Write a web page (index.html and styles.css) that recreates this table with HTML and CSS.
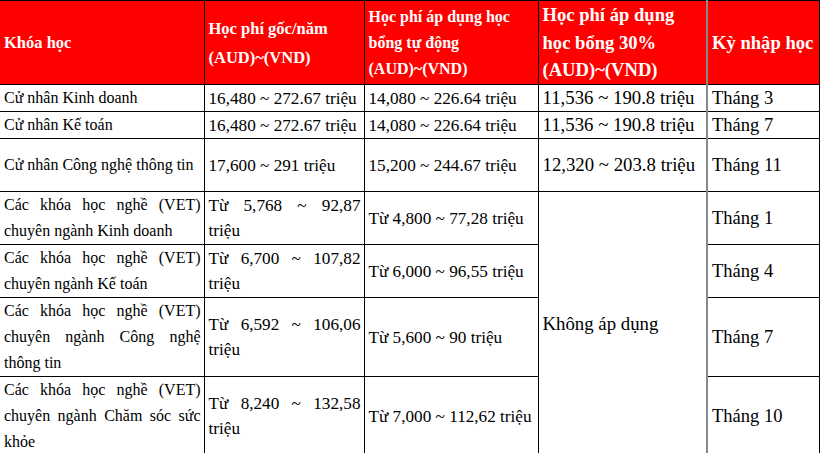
FILE: index.html
```html
<!DOCTYPE html>
<html lang="vi">
<head>
<meta charset="utf-8">
<title>Học phí</title>
<link rel="stylesheet" href="styles.css">
</head>
<body>
<table class="fees">
  <colgroup>
    <col class="c1"><col class="c2"><col class="c3"><col class="c4"><col class="c5">
  </colgroup>
  <thead>
    <tr class="r-head">
      <th class="h1">Khóa học</th>
      <th class="h2">Học phí gốc/năm<br>(AUD)~(VND)</th>
      <th class="h3">Học phí áp dụng học<br>bổng tự động<br>(AUD)~(VND)</th>
      <th class="h4">Học phí áp dụng<br>học bổng 30%<br>(AUD)~(VND)</th>
      <th class="h5 k5">Kỳ nhập học</th>
    </tr>
  </thead>
  <tbody>
    <tr class="r-27">
      <td class="d1">Cử nhân Kinh doanh</td>
      <td class="d2">16,480 ~ 272.67 triệu</td>
      <td class="d3">14,080 ~ 226.64 triệu</td>
      <td class="d4">11,536 ~ 190.8 triệu</td>
      <td class="d5 k5">Tháng 3</td>
    </tr>
    <tr class="r-27">
      <td class="d1">Cử nhân Kế toán</td>
      <td class="d2">16,480 ~ 272.67 triệu</td>
      <td class="d3">14,080 ~ 226.64 triệu</td>
      <td class="d4">11,536 ~ 190.8 triệu</td>
      <td class="d5 k5">Tháng 7</td>
    </tr>
    <tr class="r-53">
      <td class="d1">Cử nhân Công nghệ thông tin</td>
      <td class="d2">17,600 ~ 291 triệu</td>
      <td class="d3">15,200 ~ 244.67 triệu</td>
      <td class="d4">12,320 ~ 203.8 triệu</td>
      <td class="d5 k5">Tháng 11</td>
    </tr>
    <tr class="r-52">
      <td class="d1 just">Các khóa học nghề (VET) chuyên ngành Kinh doanh</td>
      <td class="d2 just">Từ 5,768 ~ 92,87 triệu</td>
      <td class="d3">Từ 4,800 ~ 77,28 triệu</td>
      <td class="d4" rowspan="4">Không áp dụng</td>
      <td class="d5 k5">Tháng 1</td>
    </tr>
    <tr class="r-52">
      <td class="d1 just">Các khóa học nghề (VET) chuyên ngành Kế toán</td>
      <td class="d2 just">Từ 6,700 ~ 107,82 triệu</td>
      <td class="d3">Từ 6,000 ~ 96,55 triệu</td>
      <td class="d5 k5">Tháng 4</td>
    </tr>
    <tr class="r-78">
      <td class="d1 just">Các khóa học nghề (VET) chuyên ngành Công nghệ thông tin</td>
      <td class="d2 just">Từ 6,592 ~ 106,06 triệu</td>
      <td class="d3">Từ 5,600 ~ 90 triệu</td>
      <td class="d5 k5">Tháng 7</td>
    </tr>
    <tr class="r-77">
      <td class="d1 just">Các khóa học nghề (VET) chuyên ngành Chăm sóc sức khỏe</td>
      <td class="d2 just">Từ 8,240 ~ 132,58 triệu</td>
      <td class="d3">Từ 7,000 ~ 112,62 triệu</td>
      <td class="d5 k5">Tháng 10</td>
    </tr>
  </tbody>
</table>
</body>
</html>
```

FILE: styles.css
```css
html, body {
  margin: 0;
  padding: 0;
  background: #ffffff;
}

body {
  font-family: "Liberation Serif", "Times New Roman", serif;
  color: #000;
}

.fees {
  width: 819px;
  table-layout: fixed;
  border-collapse: collapse;
  border-top: 1px solid #c8c8c8;
  border-right: 1px solid #333;
  border-bottom: 1px solid #000;
}

.c1 { width: 204px; }
.c2 { width: 160px; }
.c3 { width: 174px; }
.c4 { width: 169px; }
.c5 { width: 112px; }

.fees th,
.fees td {
  border: 1px solid #000;
  vertical-align: middle;
  padding: 0 3px 0 4px;
  text-align: left;
  overflow: hidden;
}

.fees th:first-child,
.fees td:first-child {
  border-left: none;
}

.fees th {
  background: #ff0000;
  color: #fff;
  font-weight: bold;
}

.r-head { height: 84px; }
.r-27 { height: 27px; }
.r-53 { height: 53px; }
.r-52 { height: 52px; }
.r-78 { height: 78px; }
.r-77 { height: 77px; }

.fees .k5 {
  border-left: 2px solid #8a8a8a;
}

.h1 { font-size: 16.5px; line-height: 26px; }
.h2 { font-size: 16.5px; line-height: 29px; }
.h3 { font-size: 16px; line-height: 26px; padding-left: 3px; }
.h4 { font-size: 18.6px; line-height: 27.5px; padding-left: 5px; }
.h5 { font-size: 18.6px; line-height: 27px; }

.d1 { font-size: 16px; line-height: 26px; padding-right: 2px; }
.d2 { font-size: 17.2px; line-height: 25px; padding-right: 4px; }
.d3 { font-size: 17.2px; line-height: 25px; padding-left: 3px; }
.d4 { font-size: 18.8px; line-height: 26px; padding-left: 5px; }
.d5 { font-size: 18.5px; line-height: 26px; }

.fees .just { text-align: justify; }
```
